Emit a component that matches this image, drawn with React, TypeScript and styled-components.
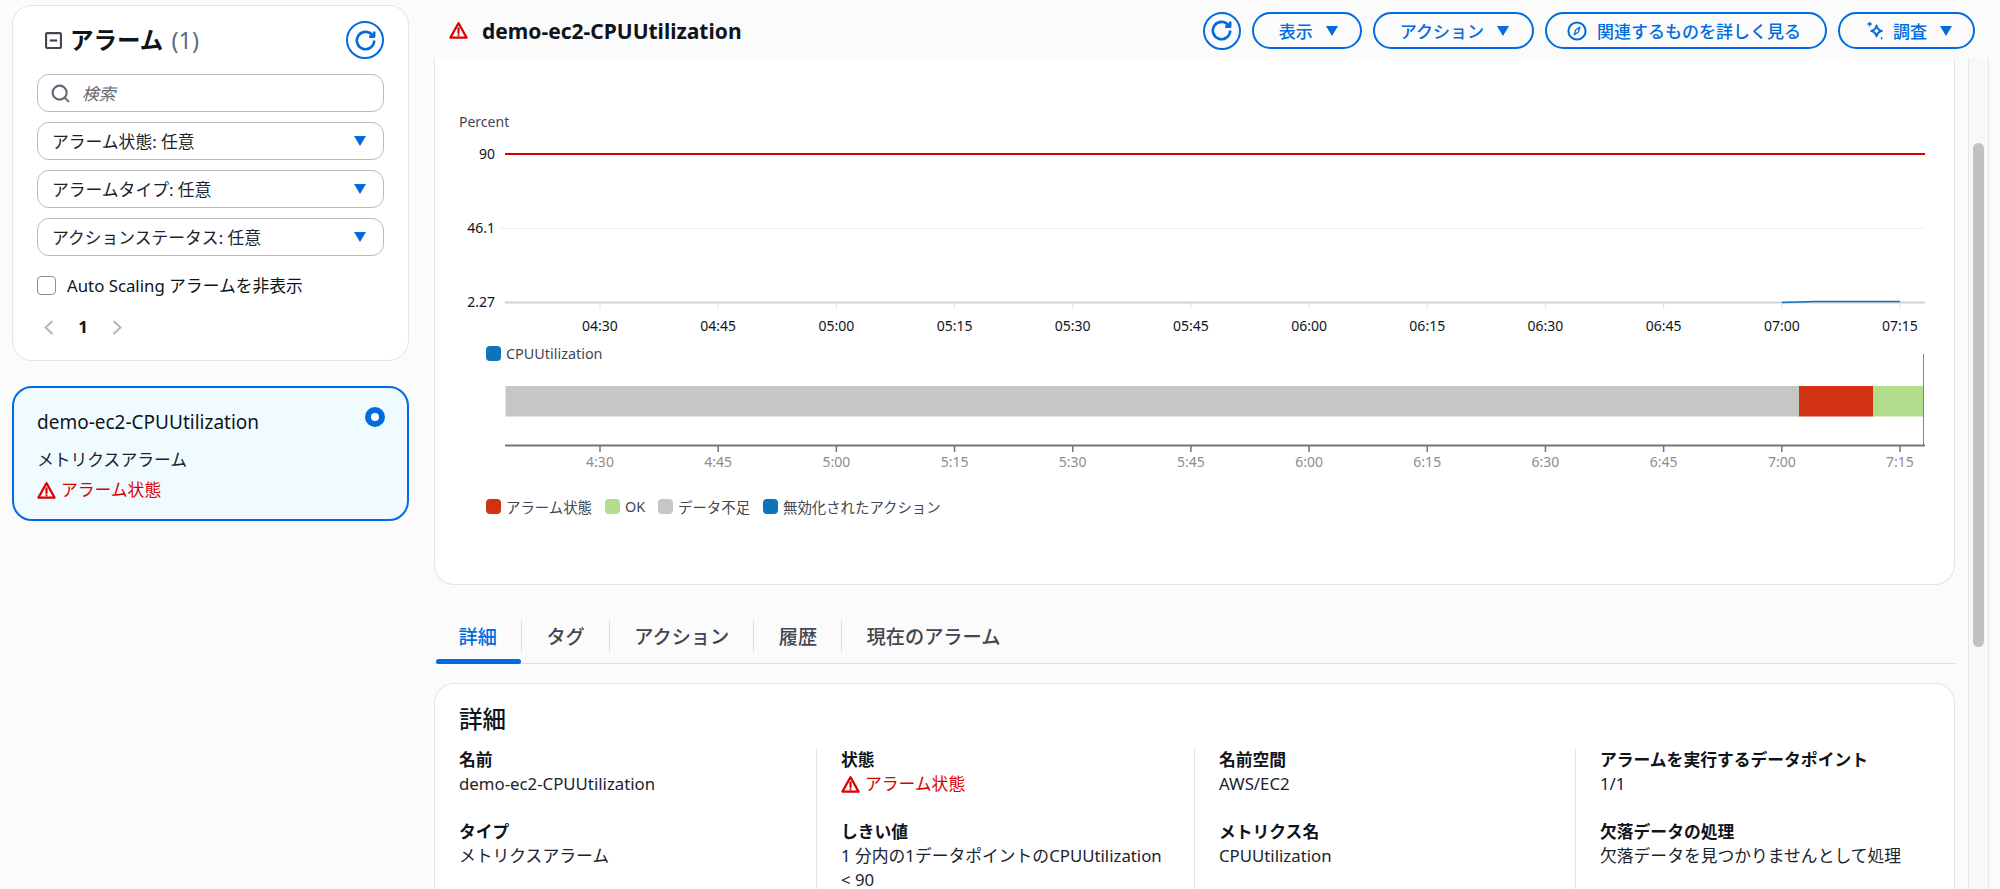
import React from "react";
import styled, { createGlobalStyle } from "styled-components";
import { Search } from "lucide-react";

const GlobalStyle = createGlobalStyle`
  html, body {
    margin: 0;
    padding: 0;
    background: #fbfbfb;
    font-family: "Noto Sans", "Noto Sans CJK JP", sans-serif;
    color: #0f141a;
  }
  * {
    box-sizing: border-box;
  }
`;

const BLUE = "#006ce0";
const RED = "#db0000";

const Page = styled.div`
  display: flex;
  width: 2000px;
  height: 889px;
  overflow: hidden;
  background: #fbfbfb;
`;

const Sidebar = styled.aside`
  width: 434px;
  flex: none;
  padding: 5px 25px 0 12px;
  display: flex;
  flex-direction: column;
  gap: 25px;
`;

const FilterCard = styled.section`
  height: 356px;
  background: #fff;
  border: 1.5px solid #e4e4e6;
  border-radius: 20px;
  padding: 15px 24px 0 24px;
  display: flex;
  flex-direction: column;
`;

const FilterHead = styled.div`
  display: flex;
  align-items: center;
  justify-content: space-between;
  height: 38px;
  margin-bottom: 15px;
`;

const FilterTitle = styled.h2`
  margin: 0 0 0 8px;
  display: flex;
  align-items: center;
  gap: 8px;
  font-size: 23.5px;
  font-weight: 700;
  line-height: 38px;
  span {
    font-weight: 400;
    color: #5f6b7a;
    margin-left: 2px;
  }
`;

const RoundButton = styled.button`
  width: 38px;
  height: 38px;
  padding: 0;
  background: transparent;
  border: 2px solid ${BLUE};
  border-radius: 50%;
  color: ${BLUE};
  display: flex;
  align-items: center;
  justify-content: center;
`;

const Field = styled.div`
  height: 38px;
  margin-bottom: 10px;
  padding: 0 17px 0 14px;
  border: 1.5px solid #b8b8bf;
  border-radius: 12px;
  background: #fff;
  display: flex;
  align-items: center;
  justify-content: space-between;
  font-size: 16.8px;
  color: #1b232d;
`;

const SearchField = styled(Field)`
  justify-content: flex-start;
  padding-left: 12px;
  gap: 11px;
  color: #656871;
  font-style: italic;
`;

const Caret = styled.i`
  display: block;
  flex: none;
  width: 0;
  height: 0;
  border-left: 6.5px solid transparent;
  border-right: 6.5px solid transparent;
  border-top: 10px solid ${BLUE};
`;

const CheckRow = styled.label`
  display: flex;
  align-items: center;
  gap: 11px;
  margin-top: 8px;
  height: 22px;
  font-size: 16.8px;
`;

const CheckBox = styled.span`
  width: 19px;
  height: 19px;
  border: 1.5px solid #8c8c94;
  border-radius: 4px;
  background: #fff;
`;

const Pager = styled.div`
  display: flex;
  align-items: center;
  margin-top: 21px;
  padding-left: 7px;
  gap: 22px;
  color: #b4b4bb;
  b {
    color: #0f141a;
    font-size: 16.8px;
    font-weight: 700;
    width: 14px;
    line-height: 20px;
    text-align: center;
  }
`;

const AlarmCard = styled.section`
  height: 135px;
  background: #f0fbff;
  border: 2px solid ${BLUE};
  border-radius: 20px;
  padding: 21px 22px 0 23px;
  position: relative;
`;

const AlarmName = styled.div`
  font-size: 19px;
  line-height: 26px;
  margin-bottom: 13px;
`;

const AlarmType = styled.div`
  font-size: 16.8px;
  line-height: 24px;
  color: #1b232d;
`;

const Status = styled.div<{ $top?: number }>`
  display: flex;
  align-items: center;
  gap: 5px;
  font-size: 16.8px;
  line-height: 24px;
  margin-top: ${(p) => p.$top ?? 6}px;
  color: ${RED};
`;

const RadioDot = styled.span`
  position: absolute;
  top: 19px;
  right: 22px;
  width: 20px;
  height: 20px;
  border-radius: 50%;
  background: #fff;
  border: 6px solid ${BLUE};
`;

const Main = styled.main`
  flex: 1;
  min-width: 0;
  display: flex;
  flex-direction: column;
`;

const Header = styled.header`
  height: 58px;
  flex: none;
  padding: 3px 25px 0 15px;
  display: flex;
  align-items: center;
  justify-content: space-between;
`;

const HeaderTitle = styled.h1`
  margin: 0;
  display: flex;
  align-items: center;
  gap: 14px;
  font-size: 21px;
  font-weight: 700;
`;

const Toolbar = styled.div`
  display: flex;
  align-items: center;
  gap: 11px;
`;

const PillButton = styled.button<{ $left: number; $right: number }>`
  height: 37px;
  padding: 0 ${(p) => p.$right}px 0 ${(p) => p.$left}px;
  background: transparent;
  border: 2px solid ${BLUE};
  border-radius: 19px;
  color: ${BLUE};
  display: flex;
  align-items: center;
  gap: 13px;
  font-family: inherit;
  font-size: 17px;
  font-weight: 500;
  white-space: nowrap;
`;

const IconLabel = styled.span<{ $gap: number }>`
  display: flex;
  align-items: center;
  gap: ${(p) => p.$gap}px;
`;

const Body = styled.div`
  flex: 1;
  min-height: 0;
  display: flex;
`;

const Content = styled.div`
  width: 1521px;
  flex: none;
  display: flex;
  flex-direction: column;
  overflow: hidden;
`;

const ChartCard = styled.section`
  height: 527px;
  flex: none;
  background: #fff;
  border: 1.5px solid #e4e4e6;
  border-top: none;
  border-radius: 0 0 20px 20px;
`;

const ChartSvg = styled.svg`
  display: block;
  overflow: visible;
  margin-left: -1.5px;
  font-family: "Noto Sans", sans-serif;
  font-size: 14px;
  fill: #0f141a;
`;

const Legend = styled.div<{ $top: number; $bottom: number }>`
  display: flex;
  align-items: center;
  gap: 13px;
  height: 24px;
  margin: ${(p) => p.$top}px 0 ${(p) => p.$bottom}px;
  padding-left: 51px;
  font-size: 14.4px;
  color: #414750;
`;

const LegendItem = styled.span`
  display: flex;
  align-items: center;
  gap: 5px;
`;

const Swatch = styled.i<{ $color: string }>`
  width: 15px;
  height: 15px;
  border-radius: 4px;
  background: ${(p) => p.$color};
`;

const Tabs = styled.nav`
  flex: none;
  height: 44px;
  margin-top: 35px;
  display: flex;
  align-items: flex-start;
  border-bottom: 1.5px solid #dedee3;
  position: relative;
`;

const Tab = styled.div<{ $active?: boolean }>`
  height: 32px;
  padding: 0 24px 0 24.5px;
  display: flex;
  align-items: center;
  font-size: 19.2px;
  font-weight: 500;
  color: ${(p) => (p.$active ? BLUE : "#424650")};
  border-left: ${(p) => (p.$active ? "none" : "1px solid #dedee3")};
  &::after {
    content: "";
    display: ${(p) => (p.$active ? "block" : "none")};
    position: absolute;
    left: 2px;
    bottom: -1px;
    width: 85px;
    height: 5px;
    border-radius: 3px;
    background: ${BLUE};
  }
`;

const DetailsCard = styled.section`
  flex: 1;
  margin-top: 19px;
  background: #fff;
  border: 1.5px solid #e4e4e6;
  border-bottom: none;
  border-radius: 20px 20px 0 0;
  display: flex;
  flex-direction: column;
`;

const DetailsTitle = styled.h2`
  margin: 0;
  padding: 18px 0 0 24px;
  height: 64px;
  flex: none;
  font-size: 23.5px;
  line-height: 34px;
  font-weight: 500;
`;

const DetailsGrid = styled.div`
  flex: 1;
  display: grid;
  grid-template-columns: 381px 378px 381px 1fr;
`;

const DetailsColumn = styled.div`
  padding: 0 25px 0 24px;
  display: flex;
  flex-direction: column;
  gap: 24px;
  & + & {
    border-left: 1px solid #e4e4e6;
  }
`;

const Detail = styled.div`
  font-size: 16.8px;
  line-height: 24px;
`;

const DetailLabel = styled.div`
  font-weight: 700;
`;

const DetailValue = styled.div`
  color: #1b232d;
`;

const ScrollTrack = styled.div`
  width: 21px;
  flex: none;
  margin-left: 13px;
  padding: 85px 4px 0 4px;
  background: #f8f8f8;
  border-left: 1px solid #e8e8e8;
  border-right: 1px solid #e8e8e8;
`;

const ScrollThumb = styled.div`
  height: 504px;
  border-radius: 6px;
  background: #c1c1c1;
`;

const WarningIcon = () => (
  <svg width="19" height="19" viewBox="0 0 16 16" fill="none" stroke={RED} strokeWidth="1.8" strokeLinejoin="round" strokeLinecap="round">
    <path d="M8 1.8 1.2 14h13.6z" />
    <path d="M8 6.2v3.8M8 12v.1" />
  </svg>
);

const RefreshIcon = () => (
  <svg width="21" height="21" viewBox="0 0 16 16" fill="none" stroke="currentColor" strokeWidth="2" strokeLinejoin="round">
    <path d="M14.6 8a6.6 6.6 0 1 1-1-3.5" />
    <path d="M14.6 1.2v3.8h-3.8" />
  </svg>
);

const CollapseIcon = () => (
  <svg width="17" height="17" viewBox="0 0 16 16" fill="none" stroke="#414750" strokeWidth="2">
    <rect x="1" y="1" width="14" height="14" rx="1" />
    <path d="M4.5 8h7" />
  </svg>
);

const CompassIcon = () => (
  <svg width="20" height="20" viewBox="0 0 20 20" fill="none" stroke="currentColor" strokeWidth="2" strokeLinejoin="round">
    <circle cx="10" cy="10" r="8.6" />
    <path d="M12.8 6.2 11.4 11 7.2 13.8 8.6 9z" strokeWidth="1.3" />
  </svg>
);

const SparkleIcon = () => (
  <svg width="19" height="20" viewBox="0 0 19 20" fill="none" stroke="currentColor" strokeWidth="2" strokeLinejoin="round" strokeLinecap="round">
    <path d="M10.5 4.6c.7 3.3 2.1 4.7 5.3 5.4-3.2.7-4.6 2.1-5.3 5.4-.7-3.3-2.1-4.7-5.3-5.4 3.2-.7 4.6-2.1 5.3-5.4z" />
    <path d="M3.6 1.4v3.4M1.9 3.1h3.4" strokeWidth="1.5" />
    <path d="M15.6 16.8v1" strokeWidth="1.5" />
  </svg>
);

const PagerArrow = ({ flip }: { flip?: boolean }) => (
  <svg width="10" height="15" viewBox="0 0 10 15" fill="none" stroke="currentColor" strokeWidth="2">
    <path d={flip ? "M1.5 1 8.5 7.5 1.5 14" : "M8.5 1 1.5 7.5 8.5 14"} />
  </svg>
);

const TICK_X = Array.from({ length: 12 }, (_, i) => 600 + i * 118.18);
const TIMES = ["4:30", "4:45", "5:00", "5:15", "5:30", "5:45", "6:00", "6:15", "6:30", "6:45", "7:00", "7:15"];

const MetricPlot = () => (
  <ChartSvg width="1521" height="280" viewBox="434 58 1521 280">
    <text x="459" y="127" fill="#414750">Percent</text>
    <text x="495" y="159" textAnchor="end">90</text>
    <text x="495" y="233" textAnchor="end">46.1</text>
    <text x="495" y="307" textAnchor="end">2.27</text>
    <line x1="500" y1="228.5" x2="1925" y2="228.5" stroke="#f0f0f0" />
    <line x1="505" y1="154" x2="1925" y2="154" stroke="#db0000" strokeWidth="2" />
    <line x1="505" y1="302.5" x2="1925" y2="302.5" stroke="#d1d1d1" strokeWidth="2" />
    {TICK_X.map((x, i) => (
      <g key={x}>
        <line x1={x} y1="303" x2={x} y2="309" stroke="#e4e4e4" />
        <text x={x} y="331" textAnchor="middle">{"0" + TIMES[i]}</text>
      </g>
    ))}
    <path d="M1782 302.5 L1815 301.4 L1900 301.4" fill="none" stroke="#0f73ba" strokeWidth="1.5" />
  </ChartSvg>
);

const StatusTimeline = () => (
  <ChartSvg width="1521" height="112" viewBox="434 368 1521 112">
    <rect x="505.5" y="386" width="1293.5" height="30.5" fill="#c6c6c6" />
    <rect x="1799" y="386" width="74" height="30.5" fill="#d13212" />
    <rect x="1873" y="386" width="50" height="30.5" fill="#b1dd8c" />
    <line x1="1923.5" y1="354" x2="1923.5" y2="446" stroke="#82828a" />
    <line x1="505" y1="445.5" x2="1925" y2="445.5" stroke="#74747e" strokeWidth="2" />
    {TICK_X.map((x, i) => (
      <g key={x}>
        <line x1={x} y1="446" x2={x} y2="452" stroke="#74747e" strokeWidth="1.5" />
        <text x={x} y="467" textAnchor="middle" fill="#8c8c94">{TIMES[i]}</text>
      </g>
    ))}
  </ChartSvg>
);

export default function App() {
  return (
    <Page>
      <GlobalStyle />
      <Sidebar>
        <FilterCard>
          <FilterHead>
            <FilterTitle>
              <CollapseIcon />
              <div>アラーム <span>(1)</span></div>
            </FilterTitle>
            <RoundButton><RefreshIcon /></RoundButton>
          </FilterHead>
          <SearchField>
            <Search size={21} color="#5f6b7a" strokeWidth={2.4} />
            検索
          </SearchField>
          <Field>アラーム状態: 任意<Caret /></Field>
          <Field>アラームタイプ: 任意<Caret /></Field>
          <Field>アクションステータス: 任意<Caret /></Field>
          <CheckRow><CheckBox />Auto Scaling アラームを非表示</CheckRow>
          <Pager>
            <PagerArrow />
            <b>1</b>
            <PagerArrow flip />
          </Pager>
        </FilterCard>
        <AlarmCard>
          <RadioDot />
          <AlarmName>demo-ec2-CPUUtilization</AlarmName>
          <AlarmType>メトリクスアラーム</AlarmType>
          <Status><WarningIcon />アラーム状態</Status>
        </AlarmCard>
      </Sidebar>
      <Main>
        <Header>
          <HeaderTitle><WarningIcon />demo-ec2-CPUUtilization</HeaderTitle>
          <Toolbar>
            <RoundButton><RefreshIcon /></RoundButton>
            <PillButton $left={25} $right={22}>表示<Caret /></PillButton>
            <PillButton $left={25} $right={23}>アクション<Caret /></PillButton>
            <PillButton $left={20} $right={24}>
              <IconLabel $gap={10}><CompassIcon />関連するものを詳しく見る</IconLabel>
            </PillButton>
            <PillButton $left={26} $right={21}>
              <IconLabel $gap={8}><SparkleIcon />調査</IconLabel><Caret />
            </PillButton>
          </Toolbar>
        </Header>
        <Body>
          <Content>
            <ChartCard>
              <MetricPlot />
              <Legend $top={3} $bottom={3}>
                <LegendItem><Swatch $color="#0f73ba" />CPUUtilization</LegendItem>
              </Legend>
              <StatusTimeline />
              <Legend $top={14} $bottom={0}>
                <LegendItem><Swatch $color="#d13212" />アラーム状態</LegendItem>
                <LegendItem><Swatch $color="#b1dd8c" />OK</LegendItem>
                <LegendItem><Swatch $color="#c6c6c6" />データ不足</LegendItem>
                <LegendItem><Swatch $color="#0f73ba" />無効化されたアクション</LegendItem>
              </Legend>
            </ChartCard>
            <Tabs>
              <Tab $active>詳細</Tab>
              <Tab>タグ</Tab>
              <Tab>アクション</Tab>
              <Tab>履歴</Tab>
              <Tab>現在のアラーム</Tab>
            </Tabs>
            <DetailsCard>
              <DetailsTitle>詳細</DetailsTitle>
              <DetailsGrid>
                <DetailsColumn>
                  <Detail>
                    <DetailLabel>名前</DetailLabel>
                    <DetailValue>demo-ec2-CPUUtilization</DetailValue>
                  </Detail>
                  <Detail>
                    <DetailLabel>タイプ</DetailLabel>
                    <DetailValue>メトリクスアラーム</DetailValue>
                  </Detail>
                </DetailsColumn>
                <DetailsColumn>
                  <Detail>
                    <DetailLabel>状態</DetailLabel>
                    <Status $top={0}><WarningIcon />アラーム状態</Status>
                  </Detail>
                  <Detail>
                    <DetailLabel>しきい値</DetailLabel>
                    <DetailValue>1 分内の1データポイントのCPUUtilization &lt; 90</DetailValue>
                  </Detail>
                </DetailsColumn>
                <DetailsColumn>
                  <Detail>
                    <DetailLabel>名前空間</DetailLabel>
                    <DetailValue>AWS/EC2</DetailValue>
                  </Detail>
                  <Detail>
                    <DetailLabel>メトリクス名</DetailLabel>
                    <DetailValue>CPUUtilization</DetailValue>
                  </Detail>
                </DetailsColumn>
                <DetailsColumn>
                  <Detail>
                    <DetailLabel>アラームを実行するデータポイント</DetailLabel>
                    <DetailValue>1/1</DetailValue>
                  </Detail>
                  <Detail>
                    <DetailLabel>欠落データの処理</DetailLabel>
                    <DetailValue>欠落データを見つかりませんとして処理</DetailValue>
                  </Detail>
                </DetailsColumn>
              </DetailsGrid>
            </DetailsCard>
          </Content>
          <ScrollTrack><ScrollThumb /></ScrollTrack>
        </Body>
      </Main>
    </Page>
  );
}
